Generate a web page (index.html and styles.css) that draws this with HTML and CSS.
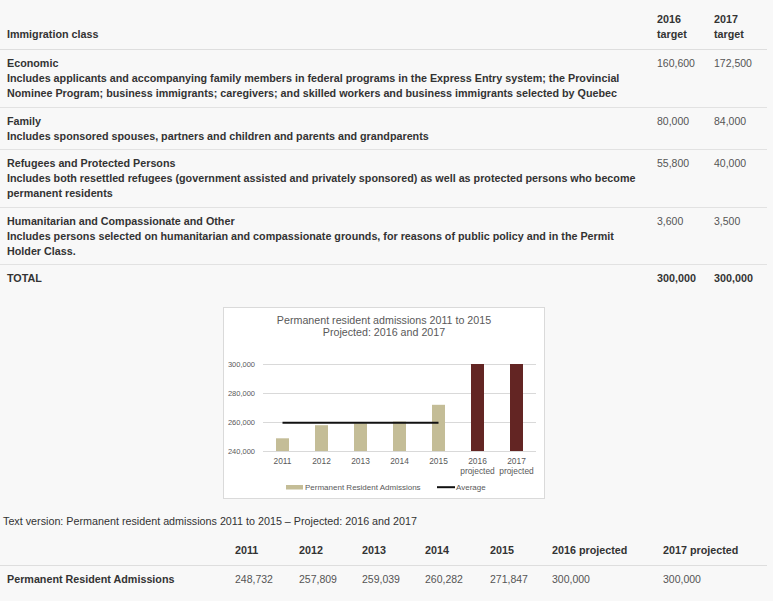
FILE: index.html
```html
<!DOCTYPE html>
<html lang="en">
<head>
<meta charset="utf-8">
<title>Immigration levels</title>
<link rel="stylesheet" href="styles.css">
</head>
<body>
<div class="page">
  <table class="targets">
    <colgroup><col class="t-c1"><col class="t-c2"><col class="t-c3"></colgroup>
    <thead>
      <tr><th>Immigration class</th><th>2016<br>target</th><th>2017<br>target</th></tr>
    </thead>
    <tbody>
      <tr>
        <td><strong>Economic<br>Includes applicants and accompanying family members in federal programs in the Express Entry system; the Provincial Nominee Program; business immigrants; caregivers; and skilled workers and business immigrants selected by Quebec</strong></td>
        <td class="num">160,600</td><td class="num">172,500</td>
      </tr>
      <tr>
        <td><strong>Family<br>Includes sponsored spouses, partners and children and parents and grandparents</strong></td>
        <td class="num">80,000</td><td class="num">84,000</td>
      </tr>
      <tr>
        <td><strong>Refugees and Protected Persons<br>Includes both resettled refugees (government assisted and privately sponsored) as well as protected persons who become permanent residents</strong></td>
        <td class="num">55,800</td><td class="num">40,000</td>
      </tr>
      <tr>
        <td><strong>Humanitarian and Compassionate and Other<br>Includes persons selected on humanitarian and compassionate grounds, for reasons of public policy and in the Permit Holder Class.</strong></td>
        <td class="num">3,600</td><td class="num">3,500</td>
      </tr>
      <tr class="total">
        <td>TOTAL</td><td>300,000</td><td>300,000</td>
      </tr>
    </tbody>
  </table>

  <figure class="chart">
    <svg class="chart-svg" width="320" height="190" viewBox="0 0 320 190">
      <text class="ch-title" x="160" y="16">Permanent resident admissions 2011 to 2015</text>
      <text class="ch-title" x="160" y="28">Projected: 2016 and 2017</text>

      <line class="grid" x1="39" y1="56.5" x2="312" y2="56.5"/>
      <line class="grid" x1="39" y1="85.5" x2="312" y2="85.5"/>
      <line class="grid" x1="39" y1="114.5" x2="312" y2="114.5"/>
      <line class="grid" x1="39" y1="143.5" x2="312" y2="143.5"/>

      <text class="ylab" x="31" y="59">300,000</text>
      <text class="ylab" x="31" y="88">280,000</text>
      <text class="ylab" x="31" y="117">260,000</text>
      <text class="ylab" x="31" y="146">240,000</text>

      <rect class="bar-tan" x="52" y="130.3" width="13" height="12.7"/>
      <rect class="bar-tan" x="91" y="117.2" width="13" height="25.8"/>
      <rect class="bar-tan" x="130" y="115.4" width="13" height="27.6"/>
      <rect class="bar-tan" x="169" y="113.6" width="13" height="29.4"/>
      <rect class="bar-tan" x="208" y="96.8" width="13" height="46.2"/>
      <rect class="bar-red" x="247" y="56" width="13" height="87"/>
      <rect class="bar-red" x="286" y="56" width="13" height="87"/>

      <line class="avg" x1="58.5" y1="114.7" x2="214.5" y2="114.7"/>

      <text class="xlab" x="58.5" y="156">2011</text>
      <text class="xlab" x="97.5" y="156">2012</text>
      <text class="xlab" x="136.5" y="156">2013</text>
      <text class="xlab" x="175.5" y="156">2014</text>
      <text class="xlab" x="214.5" y="156">2015</text>
      <text class="xlab" x="253.5" y="156">2016</text>
      <text class="xlab" x="253.5" y="165.5">projected</text>
      <text class="xlab" x="292.5" y="156">2017</text>
      <text class="xlab" x="292.5" y="165.5">projected</text>

      <rect class="bar-tan" x="62" y="177" width="17" height="4.5"/>
      <text class="leg" x="81" y="182">Permanent Resident Admissions</text>
      <line class="avg" x1="213" y1="179.2" x2="231" y2="179.2"/>
      <text class="leg" x="232" y="182">Average</text>
    </svg>
  </figure>

  <p class="textver">Text version: Permanent resident admissions 2011 to 2015 – Projected: 2016 and 2017</p>

  <table class="admissions">
    <colgroup>
      <col class="a-c1"><col class="a-c2"><col class="a-c3"><col class="a-c4"><col class="a-c5"><col class="a-c6"><col class="a-c7"><col class="a-c8">
    </colgroup>
    <thead>
      <tr><th></th><th>2011</th><th>2012</th><th>2013</th><th>2014</th><th>2015</th><th>2016 projected</th><th>2017 projected</th></tr>
    </thead>
    <tbody>
      <tr>
        <th class="rowhead">Permanent Resident Admissions</th>
        <td class="num">248,732</td><td class="num">257,809</td><td class="num">259,039</td><td class="num">260,282</td><td class="num">271,847</td><td class="num">300,000</td><td class="num">300,000</td>
      </tr>
    </tbody>
  </table>
</div>
</body>
</html>
```

FILE: styles.css
```css
html, body {
  margin: 0;
  background: #f8f8f8;
}

body {
  padding-top: 6px;
  font-family: "Liberation Sans", Arial, sans-serif;
  font-size: 10.75px;
  line-height: 15px;
  color: #333;
}

.page {
  width: 767px;
}

table {
  border-collapse: collapse;
  table-layout: fixed;
  width: 767px;
}

th, td {
  padding: 6px 6px 5.5px 7px;
  text-align: left;
  vertical-align: top;
}

thead th {
  font-weight: bold;
  vertical-align: bottom;
  padding-bottom: 7px;
  border-bottom: 1px solid #dedede;
}

.targets tbody td {
  border-bottom: 1px solid #e2e2e2;
}

.targets tbody tr.total td {
  border-bottom: none;
  font-weight: bold;
}

.num {
  color: #555;
  font-size: 10.5px;
}

.t-c1 { width: 650px; }
.t-c2 { width: 57px; }
.t-c3 { width: 60px; }

/* chart */
.chart {
  margin: 15px auto 0;
  width: 320px;
  height: 190px;
  border: 1px solid #dadada;
  background: #fff;
}

.chart-svg {
  display: block;
}

.ch-title {
  font-family: "Liberation Sans", Arial, sans-serif;
  font-size: 10.7px;
  fill: #595959;
  text-anchor: middle;
}

.grid {
  stroke: #d9d9d9;
  stroke-width: 1;
}

.ylab {
  font-family: "Liberation Sans", Arial, sans-serif;
  font-size: 7.5px;
  fill: #595959;
  text-anchor: end;
}

.xlab {
  font-family: "Liberation Sans", Arial, sans-serif;
  font-size: 8.4px;
  fill: #595959;
  text-anchor: middle;
}

.leg {
  font-family: "Liberation Sans", Arial, sans-serif;
  font-size: 8px;
  fill: #595959;
}

.bar-tan { fill: #c4bd97; }
.bar-red { fill: #632523; }

.avg {
  stroke: #111;
  stroke-width: 2;
}

/* text version */
.textver {
  margin: 15px 0 0;
  padding-left: 3px;
}

.admissions {
  margin-top: 8px;
}

.admissions thead th {
  padding-top: 6px;
  padding-bottom: 7.5px;
}

.admissions tbody th,
.admissions tbody td {
  padding-top: 5.5px;
}

.rowhead {
  font-weight: bold;
}

.a-c1 { width: 228px; }
.a-c2 { width: 64px; }
.a-c3 { width: 63px; }
.a-c4 { width: 63px; }
.a-c5 { width: 65px; }
.a-c6 { width: 62px; }
.a-c7 { width: 111px; }
.a-c8 { width: 111px; }
```
